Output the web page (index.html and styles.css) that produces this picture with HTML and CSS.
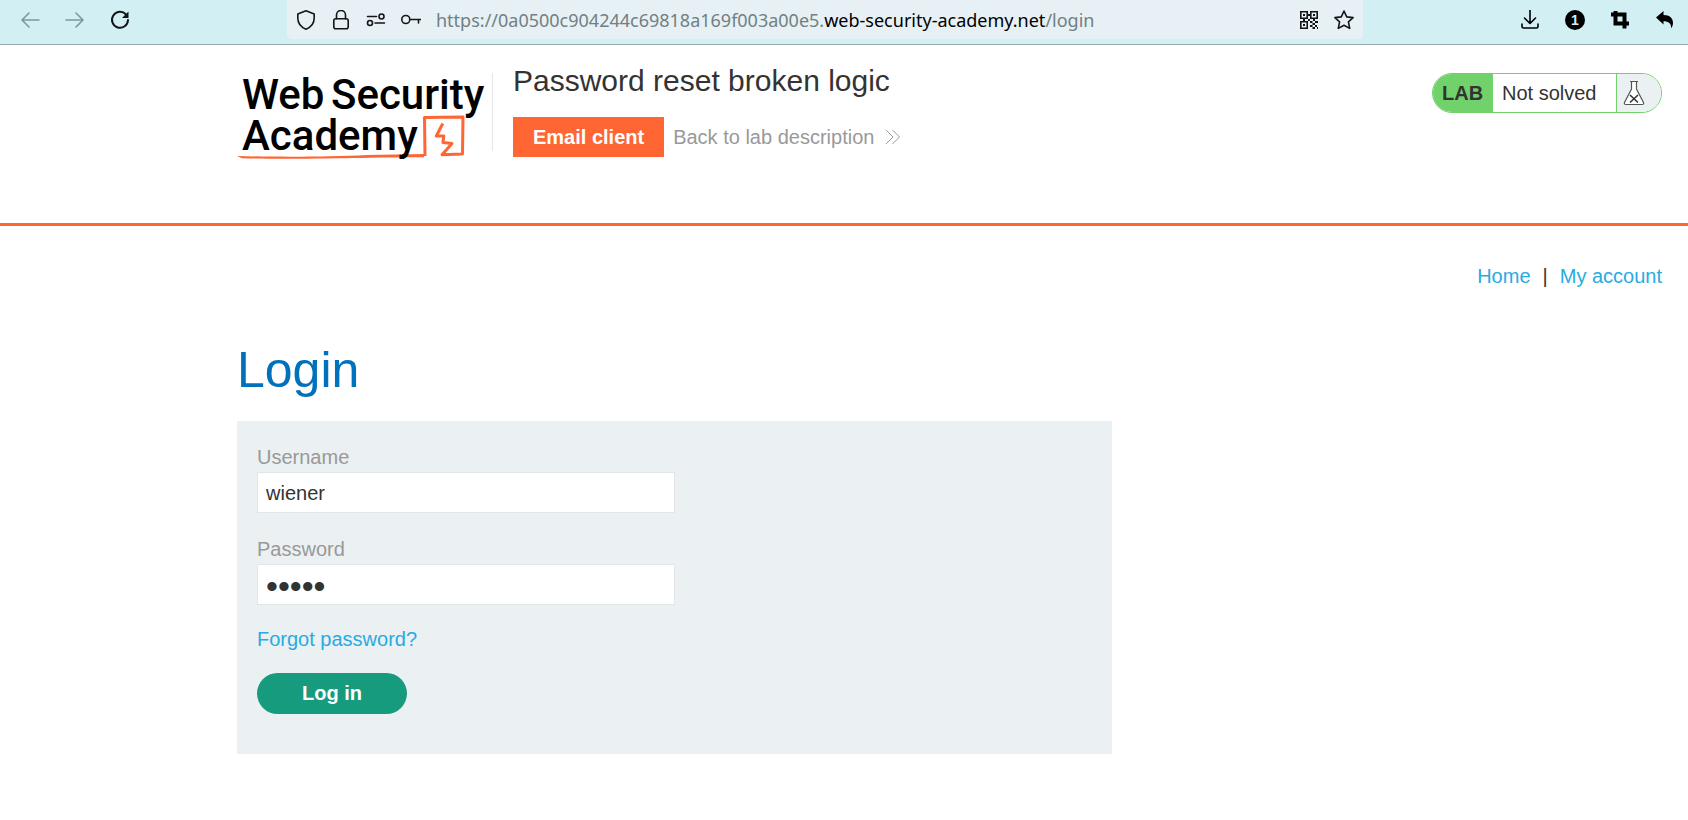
FILE: index.html
```html
<!DOCTYPE html>
<html lang="en">
<head>
<meta charset="utf-8">
<meta name="viewport" content="width=device-width, initial-scale=1">
<title>Password reset broken logic</title>
<link rel="stylesheet" href="styles.css">
</head>
<body>
<div class="toolbar">
  <div class="history">
    <button class="tool dim" type="button" aria-label="Back"><svg width="20" height="20" viewBox="0 0 20 20"><path d="M19 10H2M9 3l-7 7 7 7"/></svg></button>
    <button class="tool dim" type="button" aria-label="Forward"><svg width="20" height="20" viewBox="0 0 20 20"><path d="M1 10h17M11 3l7 7-7 7"/></svg></button>
    <button class="tool" type="button" aria-label="Reload"><svg width="20" height="20" viewBox="0 0 20 20"><path class="heavy" d="M16 4.500A8 8 0 1 0 18 10"/><path class="solid" d="M18.500 1.500v6.500h-6.500z"/></svg></button>
  </div>
  <div class="address">
    <button class="tool" type="button" aria-label="Tracking protection"><svg width="20" height="20" viewBox="0 0 20 20"><path d="M10 .8l8.200 3.200v4c0 5-2.700 9-8.200 11.200C4.500 17 1.800 13 1.800 8V4z"/></svg></button>
    <button class="tool" type="button" aria-label="Site security"><svg width="20" height="20" viewBox="0 0 20 20"><rect x="2.800" y="8.800" width="14.400" height="10" rx="2"/><path d="M5.500 8.800V5a4.500 4.500 0 0 1 9 0v3.800"/></svg></button>
    <button class="tool" type="button" aria-label="Permissions"><svg width="20" height="20" viewBox="0 0 20 20"><path d="M1.500 6.500h9M9 13h9.500"/><circle cx="15.500" cy="6.500" r="2.500"/><circle cx="4" cy="13" r="2.500"/></svg></button>
    <button class="tool" type="button" aria-label="Saved password"><svg width="20" height="20" viewBox="0 0 20 20"><circle cx="4.800" cy="9.500" r="4"/><path d="M9 9.500h10.500M17.500 9.500v3.500"/></svg></button>
    <div class="url">https://0a0500c904244c69818a169f003a00e5.<span class="domain">web-security-academy.net</span>/login</div>
    <button class="tool" type="button" aria-label="QR code"><svg width="20" height="20" viewBox="0 0 20 20"><path class="solid" fill-rule="evenodd" d="M1 1h8v8H1zM2.600 2.600v4.800h4.800V2.600zM11 1h8v8h-8zM12.600 2.600v4.800h4.800V2.600zM1 11h8v8H1zM2.600 12.600v4.800h4.800v-4.800zM4 4h2v2H4zM14 4h2v2h-2zM4 14h2v2H4zM9 4h2v2H9zM4 9h2v2H4zM9 9h2v2H9zM14 9h2v2h-2zM11 11h2.500v2H11zM16 11h3v2h-3zM13.500 13H16v2h-2.500zM11 15h2.500v2H11zM16 15h2v2h-2zM13.500 17H16v2h-2.500zM18 17h1v2h-1z"/></svg></button>
    <button class="tool" type="button" aria-label="Bookmark"><svg width="20" height="20" viewBox="0 0 20 20"><path d="M10 1l2.700 5.900 6.400.700-4.700 4.300 1.300 6.500L10 15.200l-5.700 3.200 1.300-6.500L.9 7.600l6.400-.7z"/></svg></button>
  </div>
  <div class="extras">
    <button class="tool" type="button" aria-label="Downloads"><svg width="20" height="20" viewBox="0 0 20 20"><path d="M10 0v13M4.500 8l5.500 5.500L15.500 8M2 14v2.500a1.500 1.500 0 0 0 1.500 1.500h13a1.500 1.500 0 0 0 1.500-1.500V14"/></svg></button>
    <button class="tool" type="button" aria-label="One notice"><span class="count">1</span></button>
    <button class="tool" type="button" aria-label="Screenshot"><svg width="20" height="20" viewBox="0 0 20 20"><path class="bold" d="M1 4.500h13.500v14M5.500 1v12.500h13.500"/></svg></button>
    <button class="tool" type="button" aria-label="Undo"><svg width="20" height="20" viewBox="0 0 20 20"><path class="solid" d="M1 7.500l7.500-6.500v4c6.500 0 9.500 3.500 9.500 8 0 2-.8 4-2 5.200.5-5-2.500-7-7.500-7v3.300z"/></svg></button>
  </div>
</div>

<header class="lab-header">
  <a class="logo" href="#" aria-label="Web Security Academy">
    <svg width="256" height="96" viewBox="0 -4 256 96">
      <path class="logo-fill" d="M0 84c40 1 90 1 130-1l57-1v3.200c-50-.2-130 2.800-182 1z"/>
      <path class="logo-line" d="M188 84l-.5-38.500 38.500-.5-.5 37-20.500.8 10-11.300-9-1 .8-6.500h-7.500l6.500-12.500"/>
      <g class="logo-text">
        <text x="5" y="37">Web</text>
        <text x="94" y="37">Security</text>
        <text x="5" y="78">Academy</text>
      </g>
    </svg>
  </a>
  <div class="title">
    <h2>Password reset broken logic</h2>
    <div class="actions">
      <a class="email" href="#">Email client</a>
      <a class="back" href="#">Back to lab description
        <svg width="16" height="16" viewBox="0 0 16 16"><path d="M1 1l7 7-7 7M7.500 1l7 7-7 7"/></svg></a>
    </div>
  </div>
  <div class="status">
    <span class="lab">LAB</span>
    <span class="state">Not solved</span>
    <span class="flask"><svg width="22" height="26" viewBox="0 0 22 26"><path d="M7 1.500h8M8.500 2v7L1.500 22.500q-.7 2 1.500 2h16q2.200 0 1.500-2L13.500 9V2"/><path class="cross" d="M7 15l8 7.500M15 15l-8 7.500"/></svg></span>
  </div>
</header>

<main>
  <nav><a href="#">Home</a><span>|</span><a href="#">My account</a></nav>
  <h1>Login</h1>
  <form class="login">
    <label for="username">Username</label>
    <input id="username" type="text" value="wiener">
    <label for="password">Password</label>
    <input id="password" class="secret" type="password" value="peter">
    <a href="#">Forgot password?</a>
    <button class="submit" type="button">Log in</button>
  </form>
</main>
</body>
</html>
```
FILE: styles.css
```css
* { box-sizing: border-box; }

body {
  margin: 0;
  background: #fff;
  color: #333332;
  font: 20px/24px "Liberation Sans", Arial, sans-serif;
}

a { color: #29abe2; text-decoration: none; }
svg { display: block; flex: none; }

/* Browser toolbar */
.toolbar {
  display: flex;
  height: 45px;
  padding-left: 20px;
  padding-right: 13px;
  background: #d2eff3;
  border-bottom: 1px solid #96a9ac;
}
.tool {
  display: block;
  flex: none;
  padding: 0;
  border: 0;
  background: none;
  color: #15141a;
}
.tool svg { fill: none; stroke: currentColor; stroke-width: 1.6; stroke-linejoin: round; stroke-linecap: round; }
.tool .solid { fill: currentColor; stroke: none; }
.tool .heavy { stroke-width: 2; }
.tool .bold { stroke-width: 4; stroke-linecap: butt; stroke-linejoin: miter; }
.dim { color: #83979b; }
.history { display: flex; align-items: center; gap: 25px; height: 39px; width: 267px; flex: none; }
.address {
  display: flex;
  align-items: center;
  flex: 1;
  min-width: 0;
  gap: 15px;
  height: 39px;
  padding: 0 9px;
  background: #e7f0f4;
  border-radius: 0 0 5px 5px;
}
.url {
  flex: 1;
  min-width: 0;
  overflow: hidden;
  white-space: nowrap;
  color: #718083;
  font: 18px/26px "Noto Sans", "Open Sans", sans-serif;
}
.domain { color: #000; }
.extras { display: flex; align-items: center; justify-content: flex-end; gap: 25px; height: 39px; width: 312px; flex: none; }
.extras .tool { color: #000; }
.count {
  display: block;
  width: 20px;
  height: 20px;
  border-radius: 50%;
  background: #000;
  color: #d2eff3;
  font: bold 14px/20px "Liberation Sans", Arial, sans-serif;
  text-align: center;
}

/* Lab banner */
.lab-header {
  display: flex;
  align-items: flex-start;
  height: 181px;
  padding: 18px 26px 0 237px;
  border-bottom: 3px solid #ff6633;
}
.logo { flex: none; margin-top: 5px; }
.logo-text { fill: #000; font: 500 42px Roboto, sans-serif; }
.logo-fill { fill: #ff6633; }
.logo-line { fill: none; stroke: #ff6633; stroke-width: 3; stroke-linejoin: round; }
.title { flex: 1; padding-left: 20px; }
.title::before {
  content: "";
  float: left;
  width: 1px;
  height: 78px;
  margin: 10px 0 0 -21px;
  background: #e6e6e6;
}
h2 { margin: 0; font-size: 30px; line-height: 36px; font-weight: 400; }
.actions { display: flex; align-items: center; gap: 9px; margin-top: 18px; }
.email { padding: 8px 20px; background: #ff6633; color: #fff; font-weight: 700; }
.back { display: flex; align-items: center; gap: 11px; color: #999; }
.back svg { fill: none; stroke: #999; stroke-width: 1; }
.status {
  display: flex;
  height: 40px;
  margin-top: 10px;
  border: 1px solid #71d16b;
  border-radius: 20px;
  overflow: hidden;
  line-height: 38px;
}
.lab { width: 60px; padding-left: 9px; background: #71d16b; font-weight: 700; }
.state { width: 123px; padding-left: 9px; }
.flask { display: flex; align-items: center; width: 45px; padding-left: 6px; border-left: 1px solid #71d16b; background: #ebf0f2; }
.flask svg { fill: #fff; stroke: #555; stroke-width: 1.2; }
.flask .cross { fill: none; stroke: #333; stroke-width: 1.6; }

/* Page content */
main { padding: 38px 26px 0 237px; }
nav { display: flex; justify-content: flex-end; gap: 12px; }
h1 { margin: 52px 0 21px; color: #0071bd; font-size: 50px; line-height: 60px; font-weight: 400; }
.login {
  display: flex;
  flex-direction: column;
  align-items: flex-start;
  max-width: 875px;
  padding: 24px 20px 40px;
  background: #ebf0f2;
}
.login label { margin-bottom: 3px; color: #999; }
.login input {
  width: 50%;
  height: 41px;
  margin: 0 0 24px;
  padding: 1px 8px 0;
  border: 1px solid #e3e6e6;
  background: #fff;
  color: #333332;
  font: 20px "Liberation Sans", Arial, sans-serif;
}
.login .secret { margin-bottom: 22px; padding-top: 4px; font-size: 34px; }
.submit {
  width: 150px;
  height: 41px;
  margin-top: 22px;
  padding: 0;
  border: 0;
  border-radius: 21px;
  background: #169b7f;
  color: #fff;
  font: bold 20px "Liberation Sans", Arial, sans-serif;
}
```
